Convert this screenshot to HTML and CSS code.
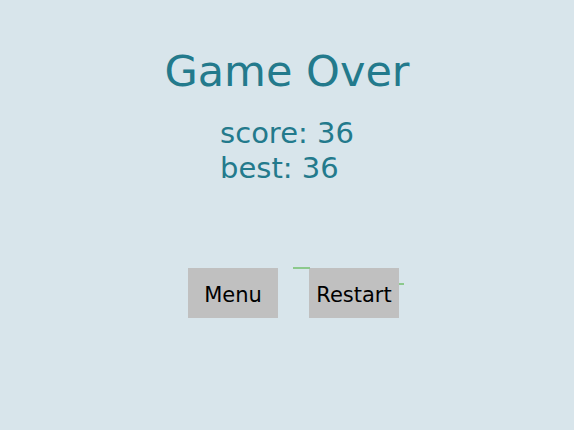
FILE: index.html
```html
<!DOCTYPE html>
<html lang="en">
<head>
  <meta charset="UTF-8" />
  <meta name="viewport" content="width=device-width, initial-scale=1.0"/>
  <title>Game Over</title>
  <link rel="stylesheet" href="styles.css">
</head>
<body>
  <div class="screen">
    <h1 class="title">Game Over</h1>

    <div class="stats">
      <div class="stat">score: <span id="score">36</span></div>
      <div class="stat">best: <span id="best">36</span></div>
    </div>

    <div class="actions">
      <button class="btn">Menu</button>
      <div class="btn-wrap">
        <span class="trail trail-top"></span>
        <button class="btn">Restart</button>
        <span class="trail trail-side"></span>
      </div>
    </div>
  </div>
</body>
</html>
```

FILE: styles.css
```css
:root {
  --bg: #d8e5eb;
  --text: #237a8c;
  --btn: #c0c0c0;
  --trail: #8cc98c;
}

* {
  box-sizing: border-box;
}

body {
  margin: 0;
  background-color: var(--bg);
  font-family: 'DejaVu Sans', sans-serif;
  color: var(--text);
}

.screen {
  width: 574px;
  height: 430px;
  display: flex;
  flex-direction: column;
  align-items: center;
  padding-top: 46px;
}

.title {
  margin: 0;
  font-size: 43px;
  font-weight: normal;
  line-height: 50px;
}

.stats {
  margin-top: 20px;
  font-size: 29px;
  line-height: 35px;
}

.actions {
  display: flex;
  gap: 31px;
  margin-top: 82px;
  margin-left: 13px;
}

.btn {
  width: 90px;
  height: 50px;
  padding: 4px 0 0;
  border: none;
  background-color: var(--btn);
  color: #000;
  font-family: 'DejaVu Sans', sans-serif;
  font-size: 21px;
}

.btn-wrap {
  position: relative;
}

.trail {
  position: absolute;
  height: 2px;
  background-color: var(--trail);
}

.trail-top {
  top: -1px;
  left: -16px;
  width: 17px;
}

.trail-side {
  top: 15px;
  left: 90px;
  width: 5px;
}
```
